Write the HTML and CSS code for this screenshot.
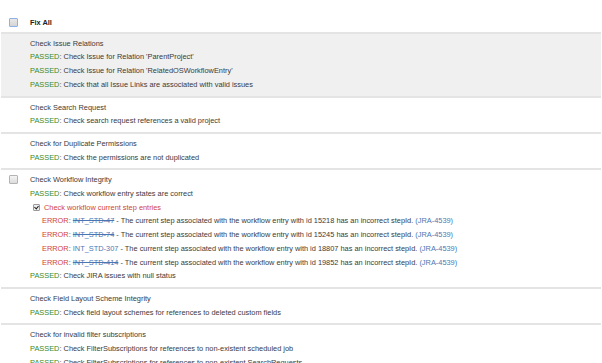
FILE: index.html
```html
<!DOCTYPE html>
<html lang="en">
<head>
    <meta charset="UTF-8">
    <title>Integrity Checker</title>
    <link rel="stylesheet" href="styles.css">
</head>
<body>
    <div class="checks">
        <div class="row head">
            <div class="box"><span class="cb cb-focus"></span></div>
            <div class="body"><b>Fix All</b></div>
        </div>

        <div class="row shaded">
            <div class="box"></div>
            <div class="body">
                <div>Check Issue Relations</div>
                <div><span class="ok">PASSED</span>: Check Issue for Relation 'ParentProject'</div>
                <div><span class="ok">PASSED</span>: Check Issue for Relation 'RelatedOSWorkflowEntry'</div>
                <div><span class="ok">PASSED</span>: Check that all Issue Links are associated with valid issues</div>
            </div>
        </div>

        <div class="row">
            <div class="box"></div>
            <div class="body">
                <div>Check Search Request</div>
                <div><span class="ok">PASSED</span>: Check search request references a valid project</div>
            </div>
        </div>

        <div class="row">
            <div class="box"></div>
            <div class="body">
                <div>Check for Duplicate Permissions</div>
                <div><span class="ok">PASSED</span>: Check the permissions are not duplicated</div>
            </div>
        </div>

        <div class="row">
            <div class="box"><span class="cb"></span></div>
            <div class="body">
                <div>Check Workflow Integrity</div>
                <div><span class="ok">PASSED</span>: Check workflow entry states are correct</div>
                <div class="sub-title"><span class="cb cb-small cb-on"></span><span class="bad">Check workflow current step entries</span></div>
                <div class="sub"><span class="bad">ERROR</span>: <a class="done">INT_STD-47</a> - The current step associated with the workflow entry with id 15218 has an incorrect stepId. <a>(JRA-4539)</a></div>
                <div class="sub"><span class="bad">ERROR</span>: <a class="done">INT_STD-74</a> - The current step associated with the workflow entry with id 15245 has an incorrect stepId. <a>(JRA-4539)</a></div>
                <div class="sub"><span class="bad">ERROR</span>: <a>INT_STD-307</a> - The current step associated with the workflow entry with id 18807 has an incorrect stepId. <a>(JRA-4539)</a></div>
                <div class="sub"><span class="bad">ERROR</span>: <a class="done">INT_STD-414</a> - The current step associated with the workflow entry with id 19852 has an incorrect stepId. <a>(JRA-4539)</a></div>
                <div><span class="ok">PASSED</span>: Check JIRA issues with null status</div>
            </div>
        </div>

        <div class="row">
            <div class="box"></div>
            <div class="body">
                <div>Check Field Layout Scheme Integrity</div>
                <div><span class="ok">PASSED</span>: Check field layout schemes for references to deleted custom fields</div>
            </div>
        </div>

        <div class="row">
            <div class="box"></div>
            <div class="body">
                <div>Check for invalid filter subscriptions</div>
                <div><span class="ok">PASSED</span>: Check FilterSubscriptions for references to non-existent scheduled job</div>
                <div><span class="ok">PASSED</span>: Check FilterSubscriptions for references to non-existent SearchRequests</div>
            </div>
        </div>
    </div>
</body>
</html>
```

FILE: styles.css
```css
* {
    margin: 0;
    padding: 0;
    box-sizing: border-box;
}
body {
    background: #fff;
    font-family: "Liberation Sans", Arial, sans-serif;
    font-size: 7.4px;
    line-height: 13.7px;
    color: #3a3a3a;
    overflow: hidden;
}
.checks {
    width: 600px;
    margin-left: 1px;
}
.row {
    display: grid;
    grid-template-columns: 29px 1fr;
    padding: 3px 0 4px;
    border-bottom: 2px solid #e4e4e4;
}
.head {
    padding-top: 16px;
    padding-bottom: 2px;
}
.shaded {
    background: #f0f0f0;
}
.box {
    padding-left: 8px;
    line-height: 0;
}
.cb {
    display: inline-block;
    width: 9px;
    height: 9px;
    margin-top: 2px;
    border: 1px solid #b4b4b4;
    border-radius: 1px;
    background: linear-gradient(#f4f4f4, #dcdcdc);
    vertical-align: top;
    position: relative;
}
.cb-focus {
    border-color: #8fb0e6;
    background: linear-gradient(#e8e8e8, #d4d4d4);
}
.cb-small {
    width: 7px;
    height: 7px;
    margin: 3px 4px 0 3px;
    border-color: #999;
    background: #eee;
}
.cb-on::after {
    content: "";
    position: absolute;
    left: 1px;
    top: 0;
    width: 2px;
    height: 3px;
    border: solid #222;
    border-width: 0 1px 1px 0;
    transform: rotate(40deg);
}
.sub-title {
    height: 13.7px;
}
b {
    color: #222;
}
.ok {
    color: #3b8a2a;
}
.bad {
    color: #d04437;
}
a {
    color: #4a77b4;
}
a.done {
    text-decoration: line-through;
}
.sub {
    padding-left: 12px;
}
```
